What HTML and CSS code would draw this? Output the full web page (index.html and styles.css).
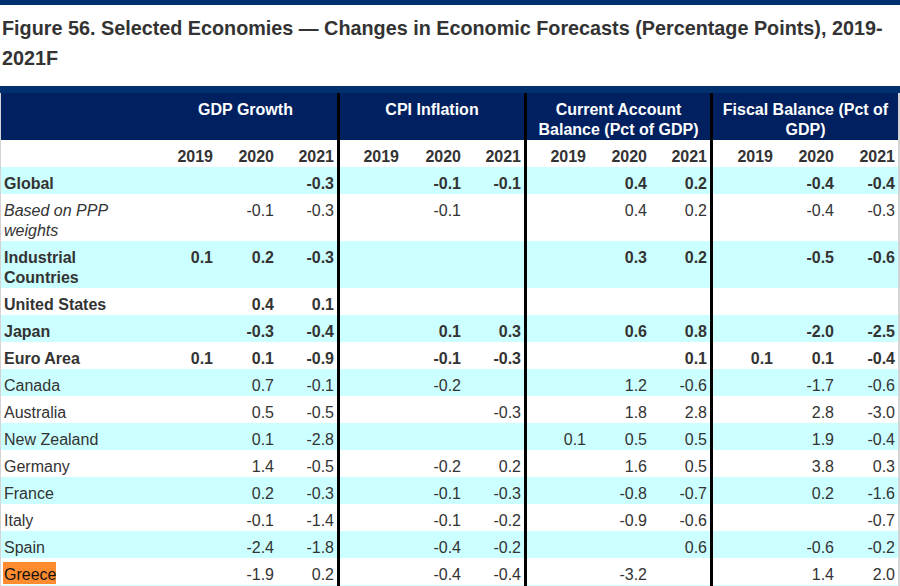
FILE: index.html
```html
<!DOCTYPE html>
<html lang="en">
<head>
<meta charset="utf-8">
<title>Figure 56</title>
<link rel="stylesheet" href="styles.css">
</head>
<body>
<div class="topbar"></div>
<h1 class="title">Figure 56. Selected Economies — Changes in Economic Forecasts (Percentage Points), 2019-<wbr>2021F</h1>
<div class="band"></div>
<div class="table">
  <div class="row head">
    <div class="hc"></div>
    <div class="hc grp end">GDP Growth</div>
    <div class="hc grp end">CPI Inflation</div>
    <div class="hc grp end">Current Account Balance (Pct of GDP)</div>
    <div class="hc grp">Fiscal Balance (Pct of GDP)</div>
  </div>
  <div class="row years">
    <div class="lab"></div>
    <div class="c">2019</div><div class="c">2020</div><div class="c end">2021</div>
    <div class="c">2019</div><div class="c">2020</div><div class="c end">2021</div>
    <div class="c">2019</div><div class="c">2020</div><div class="c end">2021</div>
    <div class="c">2019</div><div class="c">2020</div><div class="c">2021</div>
  </div>
  <div class="row alt bold">
    <div class="lab">Global</div>
    <div class="c"></div><div class="c"></div><div class="c end">-0.3</div>
    <div class="c"></div><div class="c">-0.1</div><div class="c end">-0.1</div>
    <div class="c"></div><div class="c">0.4</div><div class="c end">0.2</div>
    <div class="c"></div><div class="c">-0.4</div><div class="c">-0.4</div>
  </div>
  <div class="row">
    <div class="lab ital">Based on PPP weights</div>
    <div class="c"></div><div class="c">-0.1</div><div class="c end">-0.3</div>
    <div class="c"></div><div class="c">-0.1</div><div class="c end"></div>
    <div class="c"></div><div class="c">0.4</div><div class="c end">0.2</div>
    <div class="c"></div><div class="c">-0.4</div><div class="c">-0.3</div>
  </div>
  <div class="row alt bold">
    <div class="lab">Industrial Countries</div>
    <div class="c">0.1</div><div class="c">0.2</div><div class="c end">-0.3</div>
    <div class="c"></div><div class="c"></div><div class="c end"></div>
    <div class="c"></div><div class="c">0.3</div><div class="c end">0.2</div>
    <div class="c"></div><div class="c">-0.5</div><div class="c">-0.6</div>
  </div>
  <div class="row bold">
    <div class="lab">United States</div>
    <div class="c"></div><div class="c">0.4</div><div class="c end">0.1</div>
    <div class="c"></div><div class="c"></div><div class="c end"></div>
    <div class="c"></div><div class="c"></div><div class="c end"></div>
    <div class="c"></div><div class="c"></div><div class="c"></div>
  </div>
  <div class="row alt bold">
    <div class="lab">Japan</div>
    <div class="c"></div><div class="c">-0.3</div><div class="c end">-0.4</div>
    <div class="c"></div><div class="c">0.1</div><div class="c end">0.3</div>
    <div class="c"></div><div class="c">0.6</div><div class="c end">0.8</div>
    <div class="c"></div><div class="c">-2.0</div><div class="c">-2.5</div>
  </div>
  <div class="row bold">
    <div class="lab">Euro Area</div>
    <div class="c">0.1</div><div class="c">0.1</div><div class="c end">-0.9</div>
    <div class="c"></div><div class="c">-0.1</div><div class="c end">-0.3</div>
    <div class="c"></div><div class="c"></div><div class="c end">0.1</div>
    <div class="c">0.1</div><div class="c">0.1</div><div class="c">-0.4</div>
  </div>
  <div class="row alt">
    <div class="lab">Canada</div>
    <div class="c"></div><div class="c">0.7</div><div class="c end">-0.1</div>
    <div class="c"></div><div class="c">-0.2</div><div class="c end"></div>
    <div class="c"></div><div class="c">1.2</div><div class="c end">-0.6</div>
    <div class="c"></div><div class="c">-1.7</div><div class="c">-0.6</div>
  </div>
  <div class="row">
    <div class="lab">Australia</div>
    <div class="c"></div><div class="c">0.5</div><div class="c end">-0.5</div>
    <div class="c"></div><div class="c"></div><div class="c end">-0.3</div>
    <div class="c"></div><div class="c">1.8</div><div class="c end">2.8</div>
    <div class="c"></div><div class="c">2.8</div><div class="c">-3.0</div>
  </div>
  <div class="row alt">
    <div class="lab">New Zealand</div>
    <div class="c"></div><div class="c">0.1</div><div class="c end">-2.8</div>
    <div class="c"></div><div class="c"></div><div class="c end"></div>
    <div class="c">0.1</div><div class="c">0.5</div><div class="c end">0.5</div>
    <div class="c"></div><div class="c">1.9</div><div class="c">-0.4</div>
  </div>
  <div class="row">
    <div class="lab">Germany</div>
    <div class="c"></div><div class="c">1.4</div><div class="c end">-0.5</div>
    <div class="c"></div><div class="c">-0.2</div><div class="c end">0.2</div>
    <div class="c"></div><div class="c">1.6</div><div class="c end">0.5</div>
    <div class="c"></div><div class="c">3.8</div><div class="c">0.3</div>
  </div>
  <div class="row alt">
    <div class="lab">France</div>
    <div class="c"></div><div class="c">0.2</div><div class="c end">-0.3</div>
    <div class="c"></div><div class="c">-0.1</div><div class="c end">-0.3</div>
    <div class="c"></div><div class="c">-0.8</div><div class="c end">-0.7</div>
    <div class="c"></div><div class="c">0.2</div><div class="c">-1.6</div>
  </div>
  <div class="row">
    <div class="lab">Italy</div>
    <div class="c"></div><div class="c">-0.1</div><div class="c end">-1.4</div>
    <div class="c"></div><div class="c">-0.1</div><div class="c end">-0.2</div>
    <div class="c"></div><div class="c">-0.9</div><div class="c end">-0.6</div>
    <div class="c"></div><div class="c"></div><div class="c">-0.7</div>
  </div>
  <div class="row alt">
    <div class="lab">Spain</div>
    <div class="c"></div><div class="c">-2.4</div><div class="c end">-1.8</div>
    <div class="c"></div><div class="c">-0.4</div><div class="c end">-0.2</div>
    <div class="c"></div><div class="c"></div><div class="c end">0.6</div>
    <div class="c"></div><div class="c">-0.6</div><div class="c">-0.2</div>
  </div>
  <div class="row">
    <div class="lab"><span class="mark">Greece</span></div>
    <div class="c"></div><div class="c">-1.9</div><div class="c end">0.2</div>
    <div class="c"></div><div class="c">-0.4</div><div class="c end">-0.4</div>
    <div class="c"></div><div class="c">-3.2</div><div class="c end"></div>
    <div class="c"></div><div class="c">1.4</div><div class="c">2.0</div>
  </div>
  <div class="row alt">
    <div class="lab"></div>
    <div class="c"></div><div class="c"></div><div class="c end"></div>
    <div class="c"></div><div class="c"></div><div class="c end"></div>
    <div class="c"></div><div class="c"></div><div class="c end"></div>
    <div class="c"></div><div class="c"></div><div class="c"></div>
  </div>
</div>
</body>
</html>
```

FILE: styles.css
```css
html, body {
  margin: 0;
  padding: 0;
  background: #ffffff;
}

body {
  width: 900px;
  font-family: "Liberation Sans", Arial, sans-serif;
  color: #333333;
  overflow: hidden;
}

.topbar {
  height: 5px;
  background: #00306e;
}

.title {
  margin: 8px 0 13px;
  padding-left: 2px;
  font-size: 19.8px;
  line-height: 30px;
  font-weight: bold;
  color: #333333;
}

.band {
  height: 7px;
  background: #00306e;
}

.table {
  box-sizing: border-box;
  width: 900px;
  border-left: 1px solid #d4d4d4;
  border-right: 2px solid #d4d4d4;
}

.row {
  display: grid;
  grid-template-columns: 153px 62px 61px 63px 62px 62px 63px 62px 61px 63px 63px 61px 61px;
  font-size: 16px;
  line-height: 20px;
  background: #ffffff;
}

.row.alt {
  background: #ccffff;
}

.row.bold {
  font-weight: bold;
}

.row.head {
  background: #002060;
  color: #ffffff;
  font-weight: bold;
  height: 47px;
}

.hc {
  box-sizing: border-box;
  padding: 7px 2px 0;
  text-align: center;
}

.hc.grp {
  grid-column: span 3;
}

.row.years {
  font-weight: bold;
}

.lab {
  padding: 7px 4px 0 3px;
  text-align: left;
}

.lab.ital {
  font-style: italic;
  font-weight: normal;
}

.c {
  box-sizing: border-box;
  padding: 7px 3px 0 0;
  text-align: right;
  min-height: 27px;
}

.end {
  border-right: 3px solid #000000;
}

.mark {
  display: inline-block;
  background: #ff8c2e;
  color: #111111;
  line-height: 18px;
  padding: 4px 0 0 1px;
  margin: -4px 0 0 -1px;
}
```
